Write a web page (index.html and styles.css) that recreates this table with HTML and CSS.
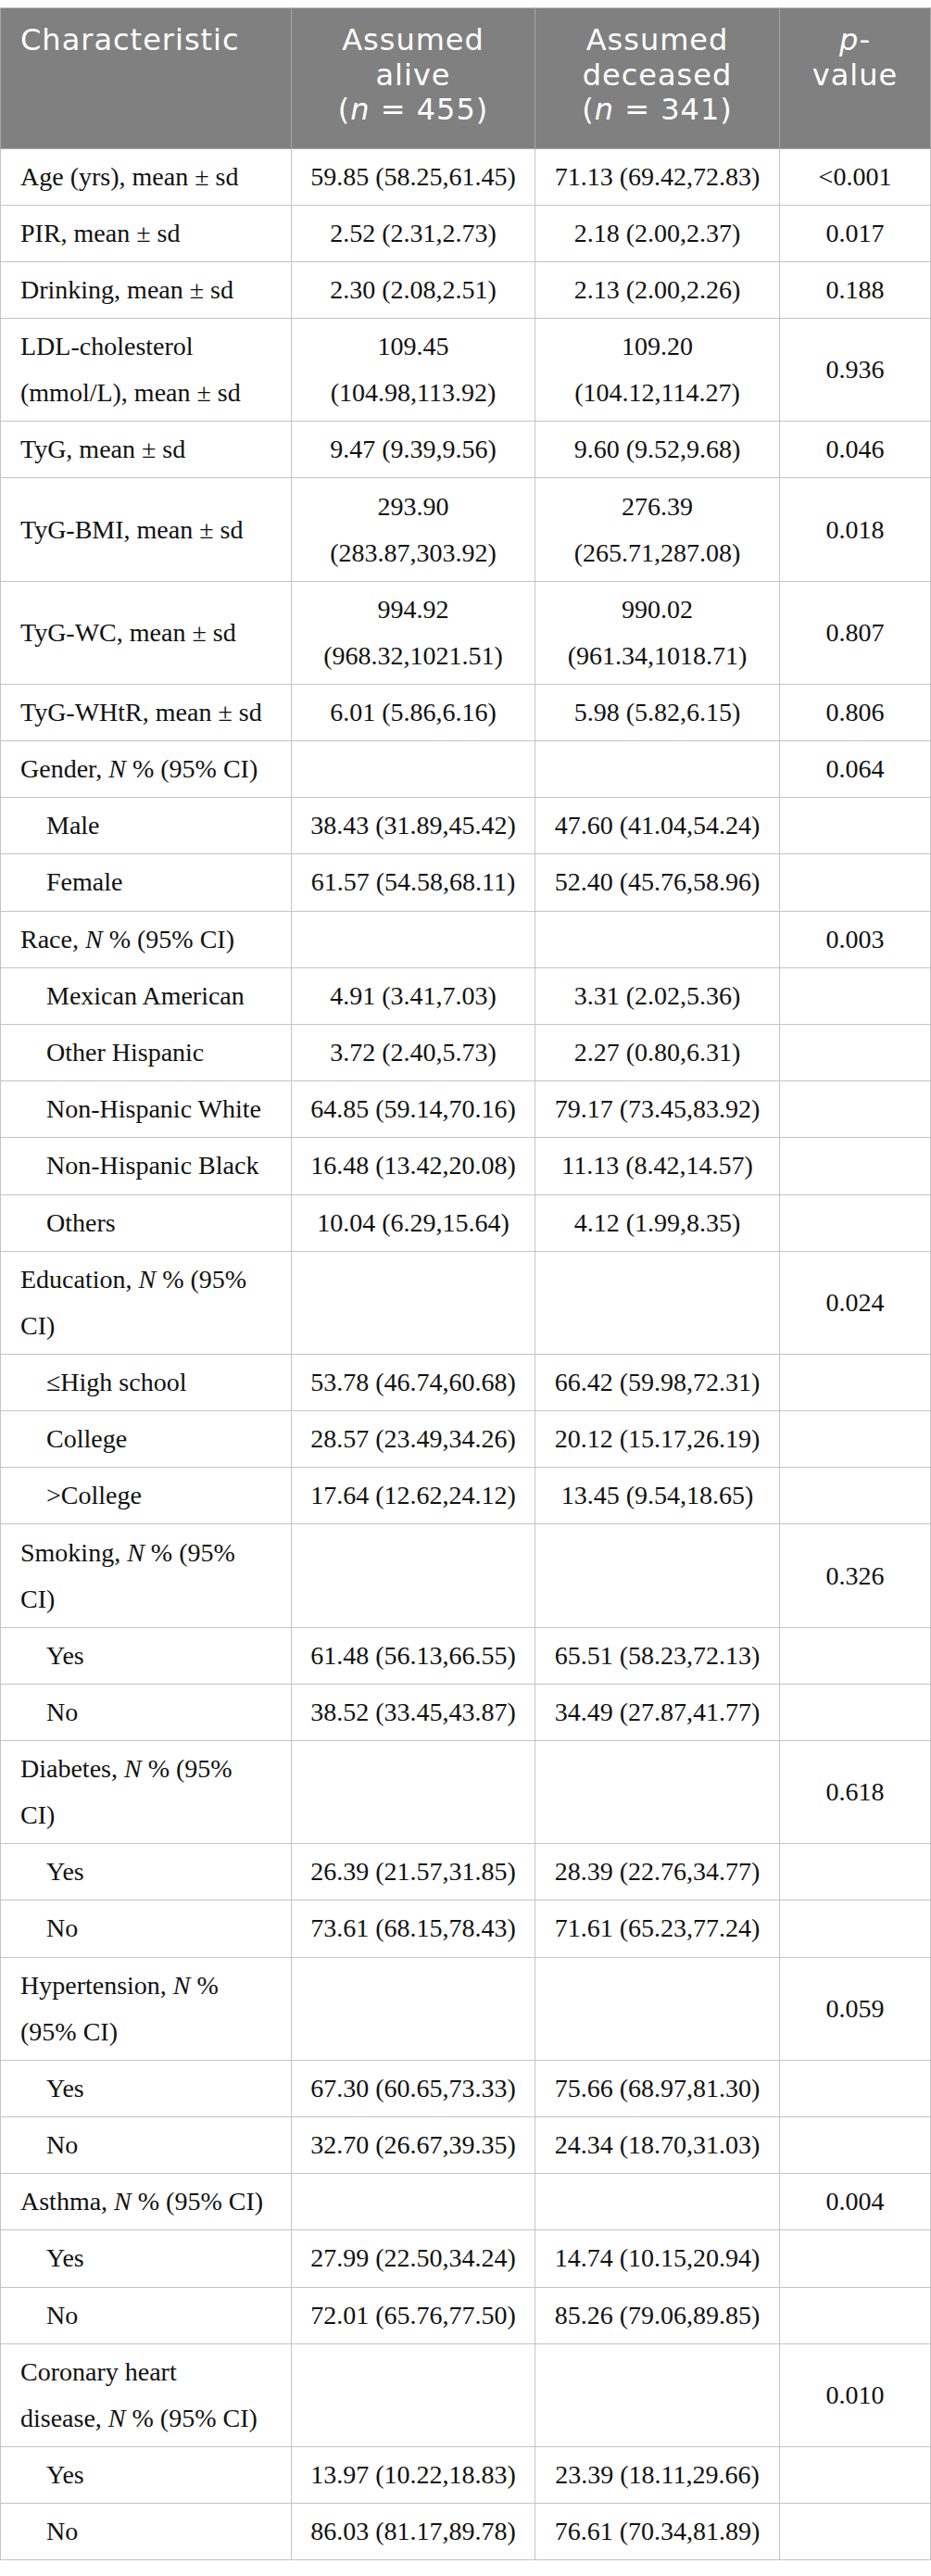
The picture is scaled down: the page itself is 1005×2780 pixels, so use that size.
FILE: index.html
```html
<!DOCTYPE html>
<html lang="en">

<head>
  <meta charset="UTF-8">
  <meta name="viewport" content="width=device-width, initial-scale=1.0">
  <title>Baseline characteristics</title>
  <link rel="stylesheet" href="styles.css">
</head>

<body>
  <section id="table-wrap">
    <table class="stats">
      <colgroup>
        <col class="col-name">
        <col class="col-alive">
        <col class="col-dead">
        <col class="col-p">
      </colgroup>
      <thead>
        <tr>
          <th class="left">Characteristic</th>
          <th>Assumed<br>alive<br>(<i>n</i> = 455)</th>
          <th>Assumed<br>deceased<br>(<i>n</i> = 341)</th>
          <th><i>p</i>-<br>value</th>
        </tr>
      </thead>
      <tbody>
        <tr><td>Age (yrs), mean ± sd</td><td>59.85 (58.25,61.45)</td><td>71.13 (69.42,72.83)</td><td>&lt;0.001</td></tr>
        <tr><td>PIR, mean ± sd</td><td>2.52 (2.31,2.73)</td><td>2.18 (2.00,2.37)</td><td>0.017</td></tr>
        <tr><td>Drinking, mean ± sd</td><td>2.30 (2.08,2.51)</td><td>2.13 (2.00,2.26)</td><td>0.188</td></tr>
        <tr><td>LDL-cholesterol<br>(mmol/L), mean ± sd</td><td>109.45<br>(104.98,113.92)</td><td>109.20<br>(104.12,114.27)</td><td>0.936</td></tr>
        <tr><td>TyG, mean ± sd</td><td>9.47 (9.39,9.56)</td><td>9.60 (9.52,9.68)</td><td>0.046</td></tr>
        <tr><td>TyG-BMI, mean ± sd</td><td>293.90<br>(283.87,303.92)</td><td>276.39<br>(265.71,287.08)</td><td>0.018</td></tr>
        <tr><td>TyG-WC, mean ± sd</td><td>994.92<br>(968.32,1021.51)</td><td>990.02<br>(961.34,1018.71)</td><td>0.807</td></tr>
        <tr><td>TyG-WHtR, mean ± sd</td><td>6.01 (5.86,6.16)</td><td>5.98 (5.82,6.15)</td><td>0.806</td></tr>

        <tr><td>Gender, <i>N</i> % (95% CI)</td><td></td><td></td><td>0.064</td></tr>
        <tr><td class="sub">Male</td><td>38.43 (31.89,45.42)</td><td>47.60 (41.04,54.24)</td><td></td></tr>
        <tr><td class="sub">Female</td><td>61.57 (54.58,68.11)</td><td>52.40 (45.76,58.96)</td><td></td></tr>

        <tr><td>Race, <i>N</i> % (95% CI)</td><td></td><td></td><td>0.003</td></tr>
        <tr><td class="sub">Mexican American</td><td>4.91 (3.41,7.03)</td><td>3.31 (2.02,5.36)</td><td></td></tr>
        <tr><td class="sub">Other Hispanic</td><td>3.72 (2.40,5.73)</td><td>2.27 (0.80,6.31)</td><td></td></tr>
        <tr><td class="sub">Non-Hispanic White</td><td>64.85 (59.14,70.16)</td><td>79.17 (73.45,83.92)</td><td></td></tr>
        <tr><td class="sub">Non-Hispanic Black</td><td>16.48 (13.42,20.08)</td><td>11.13 (8.42,14.57)</td><td></td></tr>
        <tr><td class="sub">Others</td><td>10.04 (6.29,15.64)</td><td>4.12 (1.99,8.35)</td><td></td></tr>

        <tr><td>Education, <i>N</i> % (95%<br>CI)</td><td></td><td></td><td>0.024</td></tr>
        <tr><td class="sub">≤High school</td><td>53.78 (46.74,60.68)</td><td>66.42 (59.98,72.31)</td><td></td></tr>
        <tr><td class="sub">College</td><td>28.57 (23.49,34.26)</td><td>20.12 (15.17,26.19)</td><td></td></tr>
        <tr><td class="sub">&gt;College</td><td>17.64 (12.62,24.12)</td><td>13.45 (9.54,18.65)</td><td></td></tr>

        <tr><td>Smoking, <i>N</i> % (95%<br>CI)</td><td></td><td></td><td>0.326</td></tr>
        <tr><td class="sub">Yes</td><td>61.48 (56.13,66.55)</td><td>65.51 (58.23,72.13)</td><td></td></tr>
        <tr><td class="sub">No</td><td>38.52 (33.45,43.87)</td><td>34.49 (27.87,41.77)</td><td></td></tr>

        <tr><td>Diabetes, <i>N</i> % (95%<br>CI)</td><td></td><td></td><td>0.618</td></tr>
        <tr><td class="sub">Yes</td><td>26.39 (21.57,31.85)</td><td>28.39 (22.76,34.77)</td><td></td></tr>
        <tr><td class="sub">No</td><td>73.61 (68.15,78.43)</td><td>71.61 (65.23,77.24)</td><td></td></tr>

        <tr><td>Hypertension, <i>N</i> %<br>(95% CI)</td><td></td><td></td><td>0.059</td></tr>
        <tr><td class="sub">Yes</td><td>67.30 (60.65,73.33)</td><td>75.66 (68.97,81.30)</td><td></td></tr>
        <tr><td class="sub">No</td><td>32.70 (26.67,39.35)</td><td>24.34 (18.70,31.03)</td><td></td></tr>

        <tr><td>Asthma, <i>N</i> % (95% CI)</td><td></td><td></td><td>0.004</td></tr>
        <tr><td class="sub">Yes</td><td>27.99 (22.50,34.24)</td><td>14.74 (10.15,20.94)</td><td></td></tr>
        <tr><td class="sub">No</td><td>72.01 (65.76,77.50)</td><td>85.26 (79.06,89.85)</td><td></td></tr>

        <tr><td>Coronary heart<br>disease, <i>N</i> % (95% CI)</td><td></td><td></td><td>0.010</td></tr>
        <tr><td class="sub">Yes</td><td>13.97 (10.22,18.83)</td><td>23.39 (18.11,29.66)</td><td></td></tr>
        <tr><td class="sub">No</td><td>86.03 (81.17,89.78)</td><td>76.61 (70.34,81.89)</td><td></td></tr>
      </tbody>
    </table>
  </section>
</body>

</html>
```

FILE: styles.css
```css
body {
  margin: 0;
  background: #fff;
}

#table-wrap {
  padding-top: 8px;
}

.stats {
  width: 1004px;
  table-layout: fixed;
  border-collapse: collapse;
  font-family: "Liberation Serif", "Times New Roman", serif;
  font-size: 28px;
  color: #111;
}
.col-name { width: 314px; }
.col-alive { width: 263px; }
.col-dead { width: 264px; }
.col-p { width: 163px; }

.stats th,
.stats td {
  border: 1px solid #c4c4c4;
  white-space: nowrap;
}

.stats th {
  background: #808080;
  color: #fff;
  font-family: "DejaVu Sans", "Open Sans", sans-serif;
  font-weight: normal;
  font-size: 32px;
  letter-spacing: 1px;
  line-height: 37.5px;
  text-align: center;
  vertical-align: top;
  padding: 16px 6px 22px;
  border-color: #a6a6a6;
  border-top-color: #bdbdbd;
}
.stats th.left {
  text-align: left;
  padding-left: 21px;
}

.stats td {
  line-height: 50px;
  padding: 5.1px 10px;
  text-align: center;
  vertical-align: middle;
}
.stats td:first-child {
  text-align: left;
  padding-left: 21px;
}
.stats td.sub {
  padding-left: 49px;
}
```
